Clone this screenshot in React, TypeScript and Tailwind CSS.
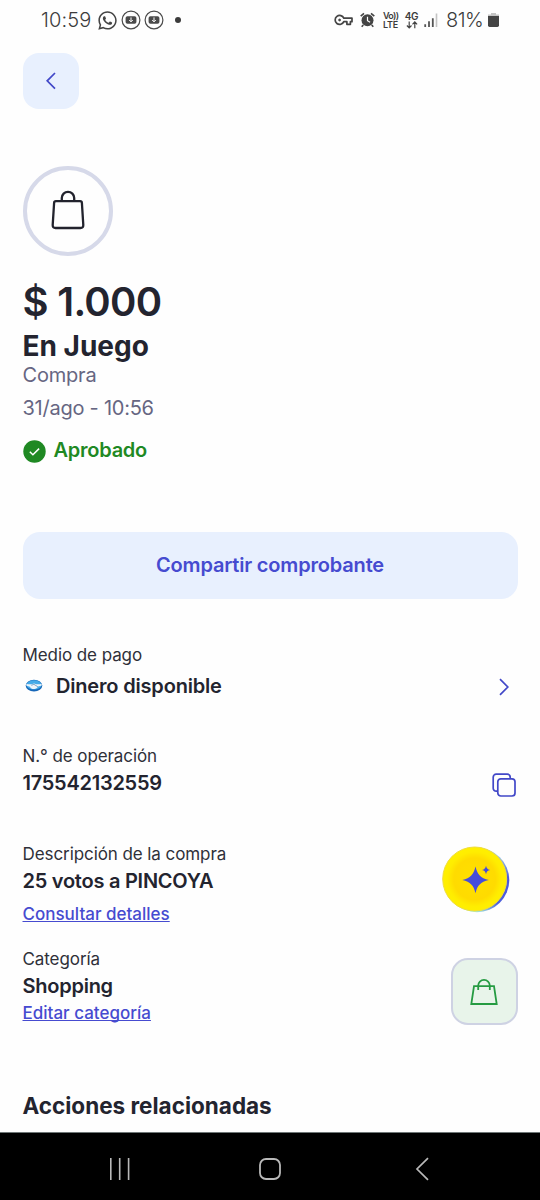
import React from "react";
import { FaWhatsapp } from "react-icons/fa";

const DownloadBadge: React.FC = () => (
  <svg width="20" height="20" viewBox="0 0 20 20" fill="none">
    <circle cx="10" cy="10" r="8.9" stroke="#4a4a4a" strokeWidth="1.2" />
    <rect x="4.6" y="6.2" width="10.8" height="7.6" rx="1.8" fill="#4a4a4a" />
    <path d="M10 7.4v4M8.2 10l1.8 1.9 1.8-1.9" stroke="#fff" strokeWidth="1" />
  </svg>
);

const StatusBar: React.FC = () => (
  <div className="flex h-10 items-center justify-between pr-[41px] pl-[41px] text-[20px] leading-10 font-light text-[#3c3c3c]">
    <div className="flex items-center">
      <span className="w-[56px] tracking-[0.1px]">10:59</span>
      <FaWhatsapp className="h-[21px] w-[21px] text-[#444]" />
      <div className="ml-[3px] flex gap-[3px]">
        <DownloadBadge />
        <DownloadBadge />
      </div>
      <span className="ml-[11px] h-[6px] w-[6px] rounded-full bg-[#3c3c3c]" />
    </div>
    <div className="flex items-center">
      {/* VPN key */}
      <svg width="19" height="12" viewBox="0 0 19 12" fill="none" stroke="#444" strokeWidth="1.7">
        <path d="M9.8 4.2H18v3.5h-1.6v2.6h-3.5V7.7H9.8A4.5 4.5 0 1 1 9.8 4.2Z" strokeLinejoin="round" />
        <circle cx="5.6" cy="6" r="1" fill="#444" strokeWidth="0.8" />
      </svg>
      {/* Alarm */}
      <svg className="ml-[7px]" width="15" height="16" viewBox="0 0 15 16" fill="none">
        <circle cx="7.5" cy="8.3" r="6" fill="#444" />
        <path d="M.7 4.2 4 1.3M14.3 4.2 11 1.3M3.3 13l-1.6 1.8M11.7 13l1.6 1.8" stroke="#444" strokeWidth="1.6" />
        <path d="M7.5 4.8v3.9l2.6 1.5" stroke="#fff" strokeWidth="1.2" />
      </svg>
      <div className="ml-[8px] w-[16px] text-[9px] leading-[9px] font-semibold">
        <div className="tracking-[-0.7px] whitespace-nowrap">Vo))</div>
        <div className="tracking-[-0.2px]">LTE</div>
      </div>
      <div className="ml-[6px] flex w-[13px] flex-col items-center text-[10px] leading-[9px] font-semibold">
        <div className="tracking-[-0.3px]">4G</div>
        <svg width="12" height="8" viewBox="0 0 12 8" fill="none" stroke="#444" strokeWidth="1.2">
          <path d="M3.2.5v6.3M.9 4.5l2.3 2.4 2.3-2.4M8.8 7.3V1M6.5 3.3 8.8.9l2.3 2.4" />
        </svg>
      </div>
      <svg className="ml-[6px]" width="14" height="16" viewBox="0 0 14 16">
        <path d="M.3 12.3h1.8V15H.3zM4.1 9.3h1.8V15H4.1zM7.9 6.2h1.8V15H7.9z" fill="#555" />
        <path d="M11.7 1.5h1.6V15h-1.6z" fill="#c4c4c4" />
      </svg>
      <span className="ml-[8px] w-[39px] tracking-[-0.5px]">81%</span>
      <svg className="ml-[3px]" width="11" height="16" viewBox="0 0 11 16">
        <path d="M3 1h5v1.5h3V5H0V2.5h3z" fill="#c4c4c4" />
        <path d="M0 4h11v9.3a1.6 1.6 0 0 1-1.6 1.6H1.6A1.6 1.6 0 0 1 0 13.3z" fill="#444" />
      </svg>
    </div>
  </div>
);

const WalletLogo: React.FC = () => (
  <svg width="18" height="14" viewBox="0 0 18 14">
    <ellipse cx="9" cy="6.6" rx="8.3" ry="5.9" fill="#1767b8" />
    <ellipse cx="9" cy="5.9" rx="7.5" ry="4.6" fill="#45abe8" />
    <path d="M1.5 4.8c2.4.9 4.7.5 7.5-.4 2.8.9 5 1.3 7.5.4l.3 1.7-3.7 1.1c-.9 1.8-2.3 2.5-4.1 2.4-1.8.1-3.3-.7-4.2-2.3L1.2 6.5z" fill="#eef5fb" />
    <path d="m6.3 6.3 2.6-1 4 2.5" fill="none" stroke="#316b9e" strokeWidth="0.6" />
  </svg>
);

const Coin: React.FC = () => (
  <svg width="68" height="68" viewBox="0 0 68 68">
    <defs>
      <radialGradient id="gold" cx="0.5" cy="0.5" r="0.5">
        <stop offset="0" stopColor="#ffe000" />
        <stop offset="0.65" stopColor="#ffdb00" />
        <stop offset="0.85" stopColor="#ffed00" />
        <stop offset="1" stopColor="#fff000" />
      </radialGradient>
      <linearGradient id="edge" x1="0.5" y1="1" x2="1" y2="0.2">
        <stop offset="0" stopColor="#a5eadb" />
        <stop offset="0.3" stopColor="#4f62dc" />
        <stop offset="0.75" stopColor="#4a56dc" />
        <stop offset="1" stopColor="#9dd0ec" />
      </linearGradient>
    </defs>
    <circle cx="35" cy="34" r="32.3" fill="url(#edge)" />
    <circle cx="32.7" cy="33" r="32" fill="url(#gold)" stroke="#f0dd3c" strokeWidth="1" />
    <path d="M33.5 20.5c1.9 8.2 4.9 11.4 13.3 13.5-8.4 2.1-11.4 5.2-13.3 13.3-1.9-8.1-4.9-11.2-13.2-13.3 8.3-2.1 11.3-5.3 13.2-13.5Z" fill="#454cdb" />
    <path d="M44 19.8c.7 2.7 1.4 3.5 4.2 4.2-2.8.7-3.5 1.5-4.2 4.2-.7-2.7-1.3-3.5-4-4.2 2.7-.7 3.3-1.5 4-4.2Z" fill="#454cdb" />
  </svg>
);

const CategoryBadge: React.FC = () => (
  <div className="flex h-[67px] w-[67px] items-center justify-center rounded-[17px] border-2 border-[#ced2e3] bg-[#e8f4ea]">
    <svg width="30" height="28" viewBox="0 0 30 28" fill="none" stroke="#259b42" strokeWidth="1.8">
      <path d="M5 8.2h20L27.7 26H2.3z" />
      <path d="M9.2 12V7.7a5.8 5.8 0 0 1 11.6 0V12" />
    </svg>
  </div>
);

interface DetailProps {
  label: string;
  value: string;
}

const Detail: React.FC<DetailProps> = ({ label, value }) => (
  <>
    <p className="text-[17px] leading-6 tracking-[-0.08px] text-[#2f3039]">{label}</p>
    <p className="mt-px text-[20px] leading-7 font-semibold tracking-[-0.25px]">{value}</p>
  </>
);

const NavigationBar: React.FC = () => (
  <div className="flex h-[68px] items-center border-t border-[#6f7777] bg-black pt-[5px] pl-[109px]">
    <svg width="22" height="22" viewBox="0 0 22 22" stroke="#b9b9b9" strokeWidth="1.6">
      <path d="M1.8 0v22M10.7 0v22M19.6 0v22" />
    </svg>
    <svg className="ml-[127px]" width="24" height="24" viewBox="0 0 24 24" fill="none" stroke="#b9b9b9" strokeWidth="1.8">
      <rect x="2" y="2" width="20" height="20" rx="6" />
    </svg>
    <svg className="ml-[133px]" width="14" height="24" viewBox="0 0 14 24" fill="none" stroke="#b9b9b9" strokeWidth="1.7">
      <path d="M13 1.2 2 12l11 10.8" />
    </svg>
  </div>
);

const App: React.FC = () => {
  return (
    <div className="flex h-[1200px] w-[540px] flex-col overflow-hidden bg-[#fefefe] font-['Inter',sans-serif] text-[#23242f]">
      <StatusBar />
      <main className="flex flex-1 flex-col px-[22.5px]">
        <button className="mt-[13px] flex h-14 w-14 items-center justify-center rounded-[16px] bg-[#e8f0fe]">
          <svg width="12" height="18" viewBox="0 0 12 18" fill="none" stroke="#4248c8" strokeWidth="1.7">
            <path d="M10 1 2.2 8.8l7.8 7.8" />
          </svg>
        </button>

        {/* Purchase summary */}
        <div className="mt-[57px] flex h-[90px] w-[90px] items-center justify-center rounded-full border-4 border-[#d6d9e9]">
          <svg className="mb-[2px]" width="34" height="40" viewBox="0 0 34 40" fill="none" stroke="#22232d" strokeWidth="2.3">
            <path d="M4.9 11.2h24.2q1.7 0 1.8 1.8l1.4 22q.1 3-2.8 3h-25q-2.9 0-2.8-3l1.4-22q.1-1.8 1.8-1.8Z" />
            <path d="M10.8 11V8a6.2 6.2 0 0 1 12.4 0v3" />
          </svg>
        </div>
        <h1 className="mt-[22px] text-[40px] leading-[48px] font-semibold tracking-[-0.7px]">$ 1.000</h1>
        <h2 className="text-[28px] leading-10 font-bold">En Juego</h2>
        <p className="text-[20px] leading-[19px] tracking-[-0.2px] text-[#666682]">Compra</p>
        <p className="mt-[9px] text-[20px] leading-7 tracking-[-0.25px] text-[#666682]">31/ago - 10:56</p>
        <div className="mt-4 flex h-6 items-center gap-2 text-[#1f8923]">
          <svg className="mt-[2px]" width="23" height="23" viewBox="0 0 23 23" fill="none">
            <circle cx="11.5" cy="11.5" r="11.2" fill="#1f8923" />
            <path d="m6.8 11.8 3.1 3 6.2-6.2" stroke="#fff" strokeWidth="1.5" />
          </svg>
          <span className="text-[20px] leading-6 font-semibold tracking-[-0.25px]">Aprobado</span>
        </div>

        <button className="mt-[70px] flex h-[67px] shrink-0 items-center justify-center rounded-[17px] bg-[#e8f0fe] pb-[2px] text-[20px] font-semibold tracking-[-0.18px] text-[#464bd0]">
          Compartir comprobante
        </button>

        {/* Payment details */}
        <section className="mt-11">
          <p className="text-[17px] leading-6 tracking-[-0.08px] text-[#2f3039]">Medio de pago</p>
          <div className="mt-[5px] flex h-7 items-center">
            <div className="ml-[2.5px] w-[31px]">
              <WalletLogo />
            </div>
            <span className="text-[20px] font-semibold tracking-[-0.18px]">Dinero disponible</span>
            <svg className="mt-[2px] mr-[7.5px] ml-auto" width="12" height="18" viewBox="0 0 12 18" fill="none" stroke="#4248c8" strokeWidth="1.7">
              <path d="m2 1.2 7.8 7.8L2 16.8" />
            </svg>
          </div>
        </section>
        <section className="mt-11 flex items-end justify-between">
          <div>
            <Detail label="N.° de operación" value="175542132559" />
          </div>
          <svg className="mr-[1.5px]" width="24" height="24" viewBox="0 0 24 24" fill="none" stroke="#4248c8" strokeWidth="1.7">
            <path d="M5.8 18.2H4.2A3 3 0 0 1 1.2 15.2V4.2a3 3 0 0 1 3-3h11a3 3 0 0 1 3 3v1.6" />
            <rect x="5.8" y="5.8" width="17.2" height="17.2" rx="3" />
          </svg>
        </section>
        <section className="mt-[45px] flex justify-between">
          <div>
            <Detail label="Descripción de la compra" value="25 votos a PINCOYA" />
            <a className="mt-[7px] block text-[17px] leading-6 font-medium text-[#464bd0] underline [text-decoration-skip-ink:none]">
              Consultar detalles
            </a>
          </div>
          <div className="mt-1 mr-[7.5px]">
            <Coin />
          </div>
        </section>
        <section className="mt-[21px] flex items-end justify-between">
          <div>
            <Detail label="Categoría" value="Shopping" />
            <a className="mt-px block text-[17px] leading-6 font-medium text-[#464bd0] underline [text-decoration-skip-ink:none]">
              Editar categoría
            </a>
          </div>
          <CategoryBadge />
        </section>
        <h3 className="mt-[66px] text-[22.5px] leading-[30px] font-bold">Acciones relacionadas</h3>
      </main>
      <NavigationBar />
    </div>
  );
};

export default App;
